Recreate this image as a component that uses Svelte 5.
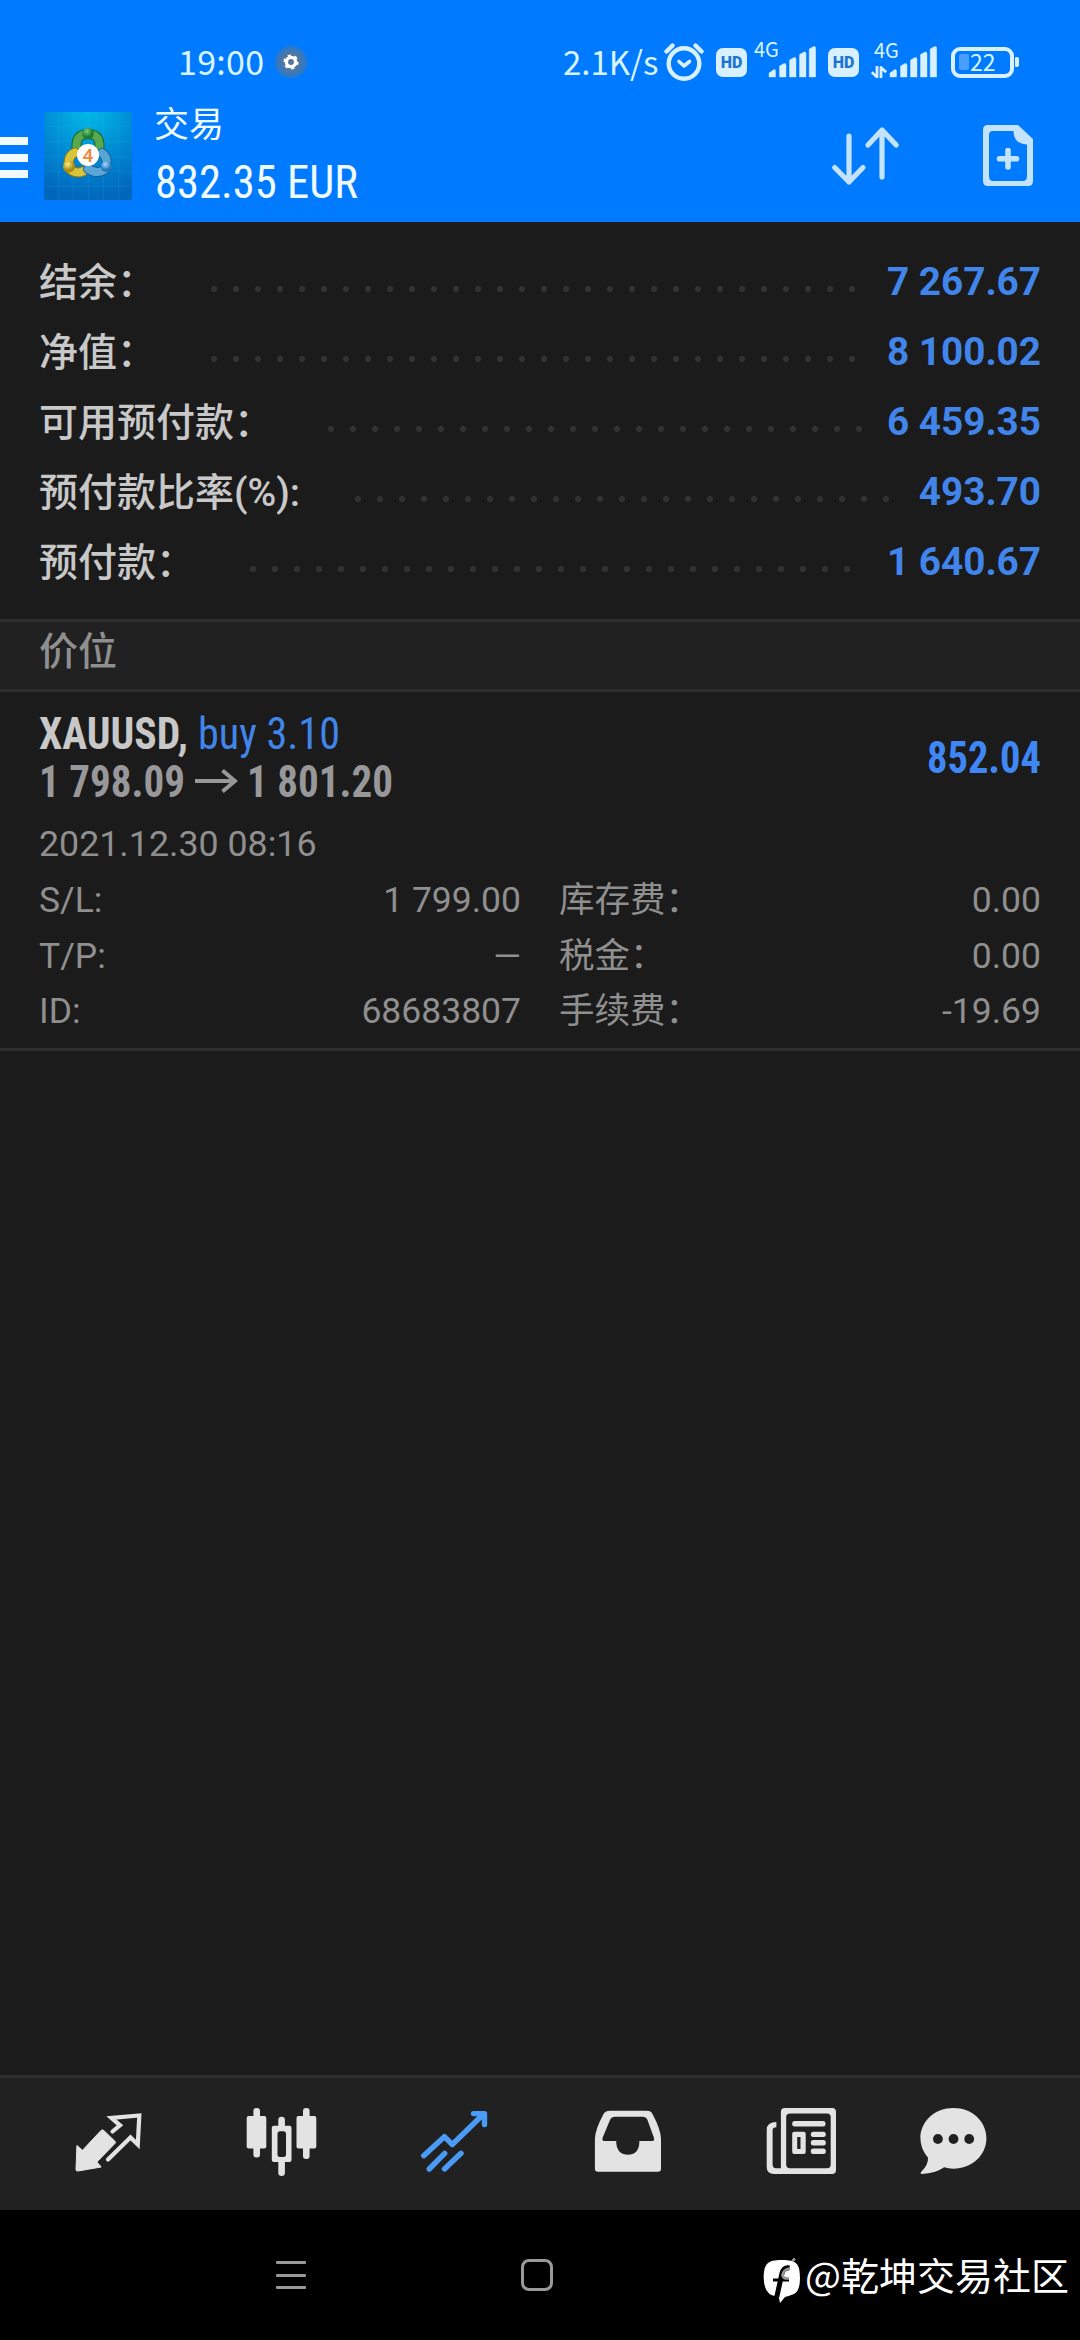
<script>
    const summary = [
        { label: '结余：', value: '7 267.67' },
        { label: '净值：', value: '8 100.02' },
        { label: '可用预付款：', value: '6 459.35' },
        { label: '预付款比率(%):', value: '493.70' },
        { label: '预付款：', value: '1 640.67' }
    ];

    const details = [
        { label: 'S/L:', value: '1 799.00' },
        { label: '库存费：', value: '0.00' },
        { label: 'T/P:', value: '—' },
        { label: '税金：', value: '0.00' },
        { label: 'ID:', value: '68683807' },
        { label: '手续费：', value: '-19.69' }
    ];

    let activeTab = $state('trade');
</script>

{#snippet condensed(text, width, size, className)}
    <svg class="condensed {className}" {width} height="48" viewBox="0 0 {width} 48">
        <text x="0" y="40" font-size={size} textLength={width} lengthAdjust="spacingAndGlyphs">{text}</text>
    </svg>
{/snippet}

{#snippet signal()}
    <svg class="signal" width="48" height="32" viewBox="0 0 48 32">
        <path d="M1 31V27L6 23.500Q7.500 23 7.500 25V31ZM11.500 31V20L16 17.500Q18 17 18 19V31ZM21.500 31V14L26 11.500Q28 11 28 13V31ZM31.500 31V8.500L36 6Q38 5.500 38 7.500V31ZM41.200 31V3L45.500.500Q47.700 0 47.700 2V31Z" fill="#d9f1ff" stroke="#d9f1ff" stroke-width=".4" stroke-linejoin="round"/>
    </svg>
{/snippet}

<div class="screen">
    <header>
        <div class="status-bar">
            <span class="clock">19:00</span>
            <span class="gear">
                <svg width="16" height="16" viewBox="0 0 16 16">
                    <circle cx="8" cy="8" r="4.600" fill="none" stroke="#fff" stroke-width="3.400"/>
                    <circle cx="8" cy="8" r="6.600" fill="none" stroke="#fff" stroke-width="2" stroke-dasharray="3.200 3.710"/>
                </svg>
            </span>
            <span class="speed">2.1K/s</span>
            <svg class="alarm" width="40" height="40" viewBox="0 0 40 40" fill="none" stroke="#d9f1ff" stroke-linecap="round">
                <circle cx="20" cy="21.500" r="15.300" stroke-width="4.400"/>
                <path d="M2.500 9.500L8.500 3.500M31.500 3.500L37.500 9.500" stroke-width="4.400"/>
                <path d="M15 19.500L20 24L25.500 19.500" stroke-width="3.600" stroke-linejoin="round"/>
            </svg>
            <span class="hd">HD</span>
            <span class="network first">4G</span>
            {@render signal()}
            <span class="hd second">HD</span>
            <div class="data">
                <span class="network">4G</span>
                <svg width="16" height="12" viewBox="0 0 16 12" fill="none" stroke="#d9f1ff" stroke-width="2.800" stroke-linejoin="round">
                    <path d="M6 0V11L.800 6.200M10 12V1.500L15.200 6.200"/>
                </svg>
            </div>
            {@render signal()}
            <div class="battery"><i></i><span>22</span></div>
            <div class="battery-tip"></div>
        </div>
        <div class="app-bar">
            <button class="menu" aria-label="menu"><i></i><i></i><i></i></button>
            <svg class="logo" width="88" height="88" viewBox="0 0 88 88">
                <defs>
                    <radialGradient id="sky" cx=".5" cy="0" r="1">
                        <stop offset="0" stop-color="#00b9e6"/>
                        <stop offset=".55" stop-color="#0088d2"/>
                        <stop offset="1" stop-color="#0066bb"/>
                    </radialGradient>
                    <radialGradient id="green" cx=".4" cy=".3"><stop offset="0" stop-color="#7fce74"/><stop offset="1" stop-color="#1b7a31"/></radialGradient>
                    <radialGradient id="yellow" cx=".4" cy=".3"><stop offset="0" stop-color="#fff08a"/><stop offset="1" stop-color="#a98d12"/></radialGradient>
                    <radialGradient id="blue" cx=".4" cy=".3"><stop offset="0" stop-color="#a5dcff"/><stop offset="1" stop-color="#1f78bb"/></radialGradient>
                </defs>
                <rect width="88" height="88" fill="url(#sky)"/>
                <path d="M0 14.500H88M0 29.500H88M0 44.500H88M0 59.500H88M0 74.500H88M14.500 0V88M29.500 0V88M44.500 0V88M59.500 0V88M74.500 0V88" stroke="#4cc3f5" stroke-opacity=".12"/>
                <g fill="none" stroke-linecap="round">
                    <path d="M33 39Q30 22 44 22T55 39" stroke="#17622e" stroke-width="10"/>
                    <path d="M33 39Q30 22 44 22T55 39" stroke="#58a84e" stroke-width="8"/>
                    <path d="M31 40.500Q23 44 25 56Q31 63 40 59" stroke="#8c7610" stroke-width="10"/>
                    <path d="M31 40.500Q23 44 25 56Q31 63 40 59" stroke="#d9c43a" stroke-width="8"/>
                    <path d="M58 41Q65 46 61.500 57Q54 63 44 57" stroke="#17609b" stroke-width="10"/>
                    <path d="M58 41Q65 46 61.500 57Q54 63 44 57" stroke="#58a5d6" stroke-width="8"/>
                </g>
                <circle cx="44" cy="21.500" r="5.800" fill="url(#green)"/>
                <circle cx="25" cy="54.500" r="6" fill="url(#yellow)"/>
                <circle cx="62.500" cy="54.500" r="5.600" fill="url(#blue)"/>
                <circle cx="44" cy="43" r="11" fill="#fffdfa"/>
                <text x="44" y="49.500" text-anchor="middle" font-size="19" font-weight="500" fill="#f0883a">4</text>
            </svg>
            <div class="title">
                <span>交易</span>
                {@render condensed('832.35 EUR', 203, 47, 'profit-total')}
            </div>
            <svg class="sort" width="70" height="64" viewBox="0 0 70 64" fill="none" stroke="#c4e3ff" stroke-width="5.200" stroke-linecap="round" stroke-linejoin="round">
                <path d="M19 12V58M4.700 43.500L19 58L33 43.500M52 53V6M38 21L52 6L66.200 21"/>
            </svg>
            <svg class="new-order" width="52" height="64" viewBox="0 0 52 64">
                <path d="M6 1H36L51 15V57Q51 62 46 62H6Q1 62 1 57V6Q1 1 6 1ZM11 7Q7 7 7 11V52Q7 57 11 57H41Q45 57 45 52V20.500Q31.500 20 31.500 7Z" fill="#c4e3ff" fill-rule="evenodd"/>
                <path d="M26 26.500V43M17.500 34.700H34.500" stroke="#c4e3ff" stroke-width="5.600" stroke-linecap="round"/>
            </svg>
        </div>
    </header>

    <section class="summary">
        {#each summary as row}
            <div class="summary-row">
                <span class="label">{row.label}</span>
                <span class="leader"></span>
                <span class="value">{row.value}</span>
            </div>
        {/each}
    </section>

    <h2>价位</h2>

    <section class="position">
        <div class="position-head">
            <div>
                <div class="line">
                    {@render condensed('XAUUSD,', 149, 44.5, 'symbol')}
                    {@render condensed('buy 3.10', 142, 44.5, 'side')}
                </div>
                <div class="line prices">
                    {@render condensed('1 798.09', 146, 44.5, 'price')}
                    <svg class="arrow" width="44" height="24" viewBox="0 0 44 24" fill="none" stroke="#98989a" stroke-width="4">
                        <path d="M1 12H41M28.500 1.500L41 12L28.500 22.500"/>
                    </svg>
                    {@render condensed('1 801.20', 146, 44.5, 'price')}
                </div>
            </div>
            {@render condensed('852.04', 114, 44.5, 'profit')}
        </div>
        <div class="date">2021.12.30 08:16</div>
        <div class="details">
            {#each details as item}
                <div class="detail"><span>{item.label}</span><span>{item.value}</span></div>
            {/each}
        </div>
    </section>

    <nav class="tabs">
        <button aria-label="quotes" onclick={() => (activeTab = 'quotes')} class:active={activeTab === 'quotes'}>
            <svg viewBox="0 0 96 96">
                <path d="M16.900 49.500L22.500 54.300L41 34.500Q42.400 33.200 43.800 34.500L55.200 45.500Q56 46.300 55.200 47.200L36.900 66L41.200 71L18 75Q16 75.300 16 73.500Z" fill="currentColor" stroke="currentColor" stroke-linejoin="round"/>
                <path d="M52.500 35.500L60 29.300L51.500 22L79.300 19.500L77.800 48.500L70.500 41.500L48 63.500" fill="none" stroke="currentColor" stroke-width="4.200" stroke-linecap="round"/>
            </svg>
        </button>
        <button aria-label="chart" onclick={() => (activeTab = 'chart')} class:active={activeTab === 'chart'}>
            <svg viewBox="0 0 96 96" fill="currentColor">
                <rect x="13.700" y="20" width="19.600" height="32.500" rx="2"/>
                <rect x="20.400" y="12" width="6.600" height="49.500" rx="3"/>
                <rect x="63.500" y="20" width="19.800" height="32.500" rx="2"/>
                <rect x="70" y="12" width="6.600" height="51" rx="3"/>
                <path d="M40.800 29.700H45.300V23.700Q45.300 20.700 48.600 20.700T51.900 23.700V29.700H56.500Q58.500 29.700 58.500 31.700V64Q58.500 66 56.500 66H51.900V77Q51.900 80 48.600 80T45.300 77V66H40.800Q38.800 66 38.800 64V31.700Q38.800 29.700 40.800 29.700ZM47 35.300Q44.500 35.300 44.500 38V58.500Q44.500 61 47 61H50.500Q53 61 53 58.500V38Q53 35.300 50.500 35.300Z" fill-rule="evenodd"/>
            </svg>
        </button>
        <button aria-label="trade" onclick={() => (activeTab = 'trade')} class:active={activeTab === 'trade'}>
            <svg viewBox="0 0 96 96" fill="none" stroke="currentColor" stroke-width="5.400" stroke-linecap="round" stroke-linejoin="round">
                <path d="M17.700 59.700L38.400 40.700L46.300 48.500L77.300 18.300M67.500 17.600H78.500V28.500M23.200 73L38.700 57.300M38.500 73L55 57.300"/>
            </svg>
        </button>
        <button aria-label="history" onclick={() => (activeTab = 'history')} class:active={activeTab === 'history'}>
            <svg viewBox="0 0 96 96" fill="currentColor">
                <path d="M31 14.700H68Q72 14.700 73.500 18Q82 34 82 43V72.500Q82 75.700 79 75.700H19Q15.900 75.700 15.900 72.500V43Q16 34 24.500 18Q26.500 14.700 31 14.700ZM36 20.700Q32.500 20.700 31 24L23.500 42Q23 45 25 45H37.300V47.500Q38.500 58.700 48.900 58.700T60.300 47.500V45H73.500Q75.500 45 75 42L68.500 24Q67 20.700 63.500 20.700Z" fill-rule="evenodd"/>
            </svg>
        </button>
        <button aria-label="news" onclick={() => (activeTab = 'news')} class:active={activeTab === 'news'}>
            <svg viewBox="0 0 96 96" fill="currentColor">
                <path d="M33 12H80Q84 12 84 16V74Q84 78 80 78H22Q14.700 78 14.700 71V34Q14.700 26 24.400 26V31.300Q20.600 31.300 20.600 34.500V68Q20.600 72.300 24 72.300H28.900V16Q28.900 12 33 12ZM38 17.500Q34.200 17.500 34.200 21V68.500Q34.200 72.300 38 72.300H75Q78.700 72.300 78.700 68.500V21Q78.700 17.500 75 17.500Z" fill-rule="evenodd"/>
                <rect x="40.200" y="25" width="33.300" height="5.400" rx="2.500"/>
                <path d="M42.200 35.700H51.700Q53.700 35.700 53.700 37.700V56Q53.700 58 51.700 58H42.200Q40.200 58 40.200 56V37.700Q40.200 35.700 42.200 35.700ZM45.200 41V53H48.500V41Z" fill-rule="evenodd"/>
                <rect x="58.800" y="35.700" width="15" height="5.400" rx="2.500"/>
                <rect x="58.800" y="44.100" width="15" height="5.400" rx="2.500"/>
                <rect x="58.800" y="52.600" width="15" height="5.400" rx="2.500"/>
            </svg>
        </button>
        <button class="chat" aria-label="chat" onclick={() => (activeTab = 'chat')} class:active={activeTab === 'chat'}>
            <svg viewBox="0 0 96 96">
                <path d="M48.400 12C67 12 81.400 25.300 81.400 42.300S67 72.700 48.400 72.700Q43 72.700 39.200 71.300Q30 77.700 17 77.900Q14.500 77.900 16.500 75.500Q23.500 68.500 23 61.700Q15.400 53 15.400 42.300C15.400 25.300 29.800 12 48.400 12Z" fill="currentColor"/>
                <g fill="#212121">
                    <circle cx="32.900" cy="43" r="4.900"/>
                    <circle cx="48.500" cy="43" r="4.900"/>
                    <circle cx="64.200" cy="43" r="4.900"/>
                </g>
            </svg>
        </button>
    </nav>

    <footer>
        <div class="recent"><i></i><i></i><i></i></div>
        <div class="home"></div>
        <div class="watermark">
            <svg width="38" height="46" viewBox="0 0 38 46">
                <path d="M19 2C34 2 37 6 37 20Q37 33 31 36Q26 38 22 39L17 45L15.500 38Q1 39 .700 20C1 6 4 2 19 2Z" fill="#fff"/>
                <path d="M26.500 10Q20.500 9 18.800 16L13.800 39" fill="none" stroke="#000" stroke-width="5"/>
                <path d="M10 22H26" stroke="#000" stroke-width="3"/>
                <path d="M27 10.500Q20 12 19.500 17Q20 21 26 20.500M29.500 3L32 .500" fill="none" stroke="#999" stroke-width="2.600"/>
            </svg>
            <span>@乾坤交易社区</span>
        </div>
    </footer>
</div>

<style>
    :global(body) {
        background: #1b1b1b;
    }

    .screen {
        width: 1080px;
        height: 2340px;
        display: flex;
        flex-direction: column;
        overflow: hidden;
        background: #1b1b1b;
        color: #8f8f8f;
        font-family: Roboto, "Noto Sans CJK SC", sans-serif;
    }

    button {
        border: none;
        padding: 0;
        background: none;
        color: inherit;
    }

    svg {
        display: block;
        flex: none;
    }

    header {
        height: 222px;
        flex: none;
        background: #007aff;
        color: #f0fbff;
    }

    /* status bar */
    .status-bar {
        display: flex;
        align-items: center;
        height: 100px;
        padding: 24px 50px 0 178px;
        box-sizing: border-box;
        font-family: "Noto Sans CJK SC", sans-serif;
        font-size: 34px;
        line-height: 44px;
        color: #d9f5ff;
    }

    .clock {
        width: 96px;
        margin-bottom: 3px;
        letter-spacing: 0.3px;
    }

    .gear {
        width: 34px;
        height: 34px;
        border-radius: 50%;
        display: flex;
        align-items: center;
        justify-content: center;
        background: radial-gradient(circle, #52779f 30%, #3079c4 60%, #007aff 72%);
    }

    .speed {
        width: 95px;
        margin: 0 0 3px 255px;
        font-size: 33px;
        white-space: nowrap;
    }

    .alarm {
        margin-left: 6px;
    }

    .hd {
        width: 31px;
        height: 29px;
        margin-left: 12px;
        border-radius: 7px;
        background: #d9f1ff;
        color: #1c76cf;
        font-family: Roboto, sans-serif;
        font-weight: 900;
        font-size: 16px;
        line-height: 29px;
        text-align: center;
    }

    .hd.second {
        margin-left: 12px;
    }

    .network {
        font-size: 20px;
        line-height: 20px;
    }

    .network.first {
        width: 27px;
        margin: 0 -13px 27px 7px;
    }

    .data {
        width: 27px;
        height: 38px;
        margin: 0 -9px 7px 12px;
        display: flex;
        flex-direction: column;
        justify-content: space-between;
    }

    .data .network {
        margin-left: 3px;
    }

    .battery {
        width: 63px;
        height: 31px;
        margin-left: 14px;
        box-sizing: border-box;
        border: 4px solid #d9f1ff;
        border-radius: 9px;
        display: flex;
        align-items: center;
        padding-left: 4px;
        font-size: 23px;
    }

    .battery span {
        margin-bottom: 2px;
    }

    .battery i {
        width: 10px;
        height: 16px;
        margin-right: 1px;
        border-radius: 2px;
        background: #4a9eff;
    }

    .battery-tip {
        width: 4px;
        height: 10px;
        margin-left: 1px;
        border-radius: 1px 2px 2px 1px;
        background: #d9f1ff;
    }

    /* app bar */
    .app-bar {
        display: flex;
        align-items: flex-start;
        height: 122px;
        padding-top: 12px;
        box-sizing: border-box;
    }

    .menu {
        width: 28px;
        height: 41px;
        margin-top: 25px;
        display: flex;
        flex-direction: column;
        justify-content: space-between;
    }

    .menu i {
        width: 28px;
        height: 8px;
        background: #f0faff;
    }

    .logo {
        margin-left: 16px;
    }

    .title {
        flex: 1;
        margin-left: 22px;
        font-size: 35px;
    }

    .title span {
        display: block;
        height: 46px;
        line-height: 28px;
    }

    .sort {
        margin: 12px 82px 0 0;
    }

    .new-order {
        margin: 12px 46px 0 0;
    }

    .condensed {
        overflow: visible;
        fill: currentColor;
        font-family: "Roboto Condensed", Roboto, sans-serif;
        font-stretch: 75%;
    }

    .profit-total {
        margin-left: 1px;
    }

    /* account summary */
    .summary {
        height: 397px;
        box-sizing: border-box;
        padding: 24px 39px 0;
        font-size: 39px;
        font-weight: 500;
    }

    .summary-row {
        display: flex;
        align-items: center;
        height: 70px;
        white-space: nowrap;
    }

    .label {
        margin-bottom: 5px;
        color: #c8c8c8;
    }

    .leader {
        flex: 1;
        height: 8px;
        margin: 15px 24px 0 46.5px;
        background: radial-gradient(circle, #323232 2.6px, transparent 3.4px) 0 0 / 22px 8px repeat-x;
    }

    .value {
        color: #4285ea;
        font-size: 38.7px;
        font-weight: 700;
    }

    h2 {
        height: 67px;
        margin: 0;
        padding-left: 39px;
        border-top: 3px solid #2e2e2e;
        border-bottom: 3px solid #2e2e2e;
        background: #212121;
        font-size: 39px;
        font-weight: 500;
        line-height: 61px;
    }

    /* open position */
    .position {
        height: 356px;
        padding: 0 39px;
        border-bottom: 3px solid #2e2e2e;
    }

    .position-head {
        display: flex;
        justify-content: space-between;
        padding-top: 17px;
    }

    .line {
        display: flex;
        align-items: center;
        gap: 9px;
        height: 48px;
    }

    .symbol {
        color: #c8c8c8;
        font-weight: 700;
    }

    .side {
        margin-left: 1px;
        color: #4285ea;
    }

    .price {
        color: #98989a;
        font-weight: 700;
    }

    .profit {
        margin-top: 24px;
        color: #3f87f5;
        font-weight: 700;
    }

    .date {
        margin-top: 18px;
        font-size: 35.75px;
        line-height: 42px;
    }

    .details {
        display: grid;
        grid-template-columns: 482px 482px;
        column-gap: 38px;
        margin-top: 8px;
    }

    .detail {
        display: flex;
        justify-content: space-between;
        height: 55.5px;
        font-size: 35.5px;
        line-height: 55.5px;
    }

    /* bottom tabs */
    .tabs {
        display: flex;
        height: 132px;
        margin-top: auto;
        padding: 0 21px;
        border-top: 3px solid #2e2e2e;
        background: #212121;
    }

    .tabs button {
        flex: 1;
        display: flex;
        align-items: center;
        justify-content: center;
        color: #e3e3e3;
    }

    .tabs button.active {
        color: #4a9bf5;
    }

    .tabs svg {
        width: 96px;
        height: 96px;
    }

    .tabs .chat svg {
        margin-right: 40px;
    }

    footer {
        display: flex;
        align-items: center;
        height: 130px;
        background: #000;
    }

    .recent {
        width: 30px;
        height: 28px;
        margin-left: 276px;
        display: flex;
        flex-direction: column;
        justify-content: space-between;
    }

    .recent i {
        height: 3px;
        border-radius: 1px;
        background: #999;
    }

    .home {
        width: 26px;
        height: 26px;
        margin-left: 215px;
        border: 3px solid #999;
        border-radius: 8px;
    }

    .watermark {
        display: flex;
        align-items: center;
        gap: 4px;
        margin: 12px 0 0 210px;
        color: #fff;
        font-family: "Noto Sans CJK SC", sans-serif;
        font-size: 38px;
        line-height: 40px;
        white-space: nowrap;
    }

    .watermark span {
        margin-top: -14px;
    }
</style>
